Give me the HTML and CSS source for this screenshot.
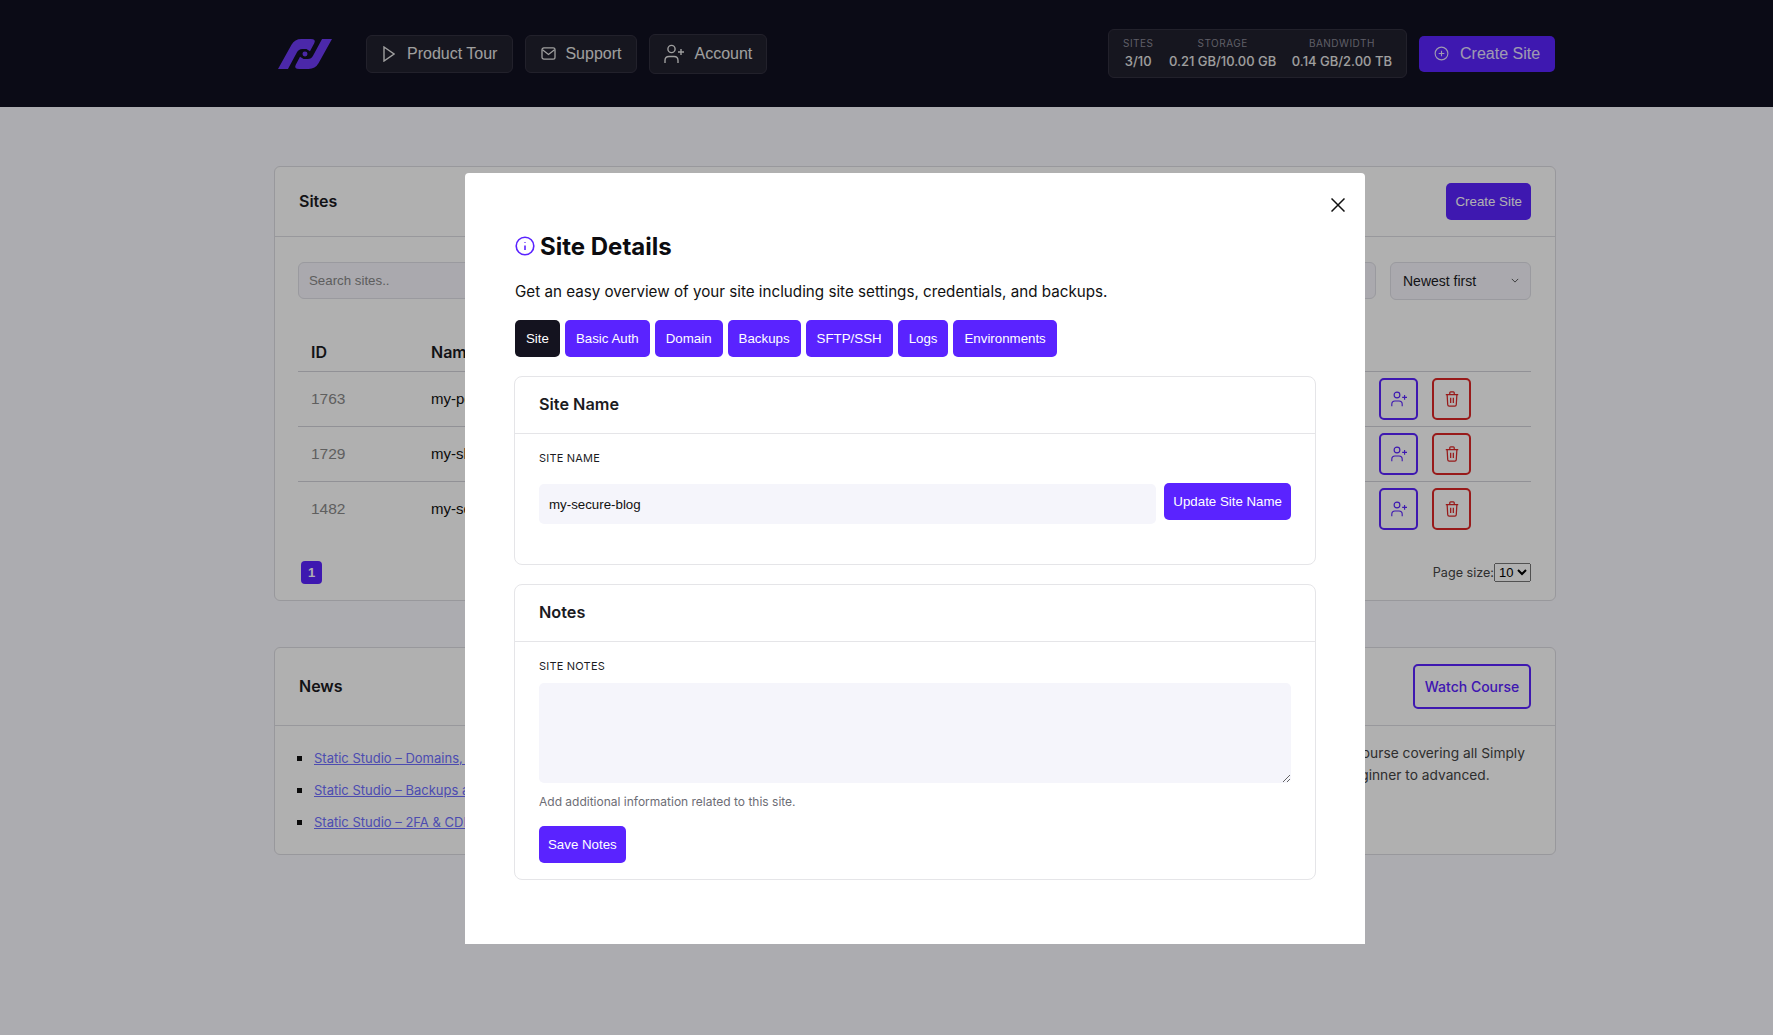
FILE: index.html
```html
<!DOCTYPE html>
<html lang="en">
<head>
<meta charset="utf-8">
<title>Site Details</title>
<link rel="stylesheet" href="styles.css">
</head>
<body>
<header class="topbar">
  <div class="topbar-inner">
    <svg class="logo" viewBox="0 0 152 84"><path d="M0 84 L38 16 Q47 0 66 0 H92 Q108 0 102 12 L90 34 L80 28 H68 Q58 28 53 38 L28 84 Z"/><path d="M152 0 L114 68 Q105 84 86 84 H60 Q44 84 50 72 L62 50 L72 56 H84 Q94 56 99 46 L124 0 Z"/><circle cx="76" cy="42" r="7"/></svg>
    <nav class="topnav">
      <a class="navbtn"><svg class="ico-play" viewBox="0 0 12 16"><path d="M1 1 L11 8 L1 15 Z"/></svg>Product Tour</a>
      <a class="navbtn"><svg class="ico-mail" viewBox="0 0 16 14"><rect x="1" y="1" width="14" height="12" rx="2"/><path d="M1.5 3 L8 8 L14.5 3"/></svg>Support</a>
      <a class="navbtn navbtn-tall"><svg class="ico-user" viewBox="0 0 20 20"><circle cx="7.5" cy="5" r="3.6"/><path d="M1 19 V16.5 Q1 12.5 5 12.5 H10 Q14 12.5 14 16.5 V19"/><path d="M17 5 V11 M14 8 H20"/></svg>Account</a>
    </nav>
    <div class="stats">
      <div class="stat"><span class="stat-label">Sites</span><span class="stat-value">3/10</span></div>
      <div class="stat"><span class="stat-label">Storage</span><span class="stat-value">0.21 GB/10.00 GB</span></div>
      <div class="stat"><span class="stat-label">Bandwidth</span><span class="stat-value">0.14 GB/2.00 TB</span></div>
    </div>
    <a class="create-top"><svg class="ico-plus" viewBox="0 0 16 16"><circle cx="8" cy="8" r="6.8"/><path d="M8 5 V11 M5 8 H11"/></svg>Create Site</a>
  </div>
</header>

<main class="page">
  <section class="card">
    <div class="card-head">
      <h3 class="card-title">Sites</h3>
      <a class="btn btn-dim">Create Site</a>
    </div>
    <div class="sites-body">
      <div class="filters">
        <input class="search" placeholder="Search sites..">
        <div class="sort">
          <select class="sort-select"><option>Newest first</option></select>
          <svg class="sort-chevron" viewBox="0 0 10 6"><path d="M1 1 L5 5 L9 1"/></svg>
        </div>
      </div>
      <table class="sites">
        <thead><tr><th class="col-id">ID</th><th class="col-name">Name</th><th class="col-act"></th></tr></thead>
        <tbody>
          <tr><td class="cell-id">1763</td><td>my-portfolio</td><td>
            <div class="actions"><a class="act act-blue"><svg class="ico-act" viewBox="0 0 20 20"><circle cx="7.5" cy="5" r="3.6"/><path d="M1 19 V16.5 Q1 12.5 5 12.5 H10 Q14 12.5 14 16.5 V19"/><path d="M17 5 V11 M14 8 H20"/></svg></a>
            <a class="act act-red"><svg class="ico-act" viewBox="0 0 16 18"><path d="M1 4 H15 M5.5 4 V2 Q5.5 1 6.5 1 H9.5 Q10.500 1 10.500 2 V4 M2.500 4 L3.200 15.500 Q3.300 17 4.800 17 H11.200 Q12.700 17 12.800 15.500 L13.500 4 M6.500 7.500 V13.500 M9.500 7.500 V13.500"/></svg></a></div></td></tr>
          <tr><td class="cell-id">1729</td><td>my-shop</td><td>
            <div class="actions"><a class="act act-blue"><svg class="ico-act" viewBox="0 0 20 20"><circle cx="7.5" cy="5" r="3.6"/><path d="M1 19 V16.5 Q1 12.5 5 12.5 H10 Q14 12.5 14 16.5 V19"/><path d="M17 5 V11 M14 8 H20"/></svg></a>
            <a class="act act-red"><svg class="ico-act" viewBox="0 0 16 18"><path d="M1 4 H15 M5.5 4 V2 Q5.5 1 6.5 1 H9.5 Q10.500 1 10.500 2 V4 M2.500 4 L3.200 15.500 Q3.300 17 4.800 17 H11.200 Q12.700 17 12.800 15.500 L13.500 4 M6.500 7.500 V13.500 M9.500 7.500 V13.500"/></svg></a></div></td></tr>
          <tr><td class="cell-id">1482</td><td>my-secure-blog</td><td>
            <div class="actions"><a class="act act-blue"><svg class="ico-act" viewBox="0 0 20 20"><circle cx="7.5" cy="5" r="3.6"/><path d="M1 19 V16.5 Q1 12.5 5 12.5 H10 Q14 12.5 14 16.5 V19"/><path d="M17 5 V11 M14 8 H20"/></svg></a>
            <a class="act act-red"><svg class="ico-act" viewBox="0 0 16 18"><path d="M1 4 H15 M5.5 4 V2 Q5.5 1 6.5 1 H9.5 Q10.500 1 10.500 2 V4 M2.500 4 L3.200 15.500 Q3.300 17 4.800 17 H11.200 Q12.700 17 12.800 15.500 L13.500 4 M6.500 7.500 V13.500 M9.500 7.500 V13.500"/></svg></a></div></td></tr>
        </tbody>
      </table>
      <div class="pager">
        <a class="page-num">1</a>
        <label class="page-size">Page size:<select class="page-select"><option>10</option></select></label>
      </div>
    </div>
  </section>

  <section class="card news">
    <div class="card-head news-head">
      <h3 class="card-title">News</h3>
      <a class="btn-outline">Watch Course</a>
    </div>
    <div class="news-body">
      <ul class="news-list">
        <li><a>Static Studio – Domains, SSL and Redirects</a></li>
        <li><a>Static Studio – Backups and Restores</a></li>
        <li><a>Static Studio – 2FA &amp; CDN Settings</a></li>
      </ul>
      <p class="news-text">Watch our free course covering all Simply<br>Static Studio, beginner to advanced.</p>
    </div>
  </section>
</main>

<div class="overlay"></div>

<div class="modal">
  <svg class="close" viewBox="0 0 14 14"><path d="M0.500 0.500 L13.500 13.500 M13.500 0.500 L0.500 13.500"/></svg>
  <h2 class="modal-title"><svg class="ico-info" viewBox="0 0 20 20"><circle cx="10" cy="10" r="8.800"/><path d="M10 9.500 V14 M10 6 V6.800"/></svg>Site Details</h2>
  <p class="modal-lead">Get an easy overview of your site including site settings, credentials, and backups.</p>
  <div class="tabs">
    <a class="tab tab-active">Site</a>
    <a class="tab">Basic Auth</a>
    <a class="tab">Domain</a>
    <a class="tab">Backups</a>
    <a class="tab">SFTP/SSH</a>
    <a class="tab">Logs</a>
    <a class="tab">Environments</a>
  </div>
  <section class="panel">
    <h4 class="panel-head">Site Name</h4>
    <div class="panel-body panel-name">
      <label class="field-label">Site Name</label>
      <div class="name-row">
        <input class="text-input" value="my-secure-blog">
        <a class="btn">Update Site Name</a>
      </div>
    </div>
  </section>
  <section class="panel panel-notes">
    <h4 class="panel-head">Notes</h4>
    <div class="panel-body">
      <label class="field-label">Site Notes</label>
      <textarea class="notes"></textarea>
      <p class="help">Add additional information related to this site.</p>
      <a class="btn btn-save">Save Notes</a>
    </div>
  </section>
</div>
</body>
</html>
```
FILE: styles.css
```css
* { box-sizing: border-box; }
html, body { height: 100%; }
body {
  margin: 0;
  overflow: hidden;
  background: #faf9ff;
  color: #111;
  font-family: "Liberation Sans", Arial, sans-serif;
  font-size: 15px;
}
h2, h3, h4, p, ul { margin: 0; }

/* Top bar */
.topbar { height: 107px; background: #111020; }
.topbar-inner {
  width: 1280px;
  margin-left: 275px;
  height: 100%;
  padding-left: 3px;
  display: flex;
  align-items: center;
}
.logo { width: 54px; height: 30px; fill: #6d3bf5; margin-right: 34px; }
.topnav { display: flex; align-items: center; gap: 12px; }
.navbtn {
  display: flex;
  align-items: center;
  height: 38px;
  padding: 0 15px;
  background: #21202d;
  border: 1px solid #32313f;
  border-radius: 6px;
  color: #e6e6e6;
  font-size: 16px;
}
.navbtn-tall { height: 40px; padding: 0 14px; }
.navbtn svg { fill: none; stroke: #e6e6e6; stroke-width: 1.4; }
.ico-play { width: 12px; height: 16px; margin: 0 12px 0 1px; }
.ico-mail { width: 15px; height: 13px; margin-right: 9px; }
.ico-user { width: 20px; height: 20px; margin-right: 10px; }
.stats {
  margin-left: auto;
  width: 299px;
  height: 49px;
  padding: 0 14px 2px;
  display: flex;
  align-items: center;
  justify-content: space-between;
  background: #21202d;
  border: 1px solid #32313f;
  border-radius: 6px;
}
.stat { display: flex; flex-direction: column; align-items: center; gap: 4px; }
.stat-label {
  font-family: Inter, sans-serif;
  font-size: 10px;
  line-height: 12px;
  letter-spacing: 0.5px;
  text-transform: uppercase;
  color: #8a8996;
}
.stat-value {
  font-family: Inter, sans-serif;
  font-size: 13px;
  line-height: 16px;
  font-weight: 500;
  color: #e6e6e6;
}
.create-top {
  margin-left: 12px;
  display: flex;
  align-items: center;
  height: 36px;
  width: 136px;
  padding-left: 15px;
  background: #5a23ff;
  border-radius: 5px;
  color: #e6e0ff;
  font-size: 16px;
}
.ico-plus { width: 15px; height: 15px; margin-right: 11px; fill: none; stroke: #e6e0ff; stroke-width: 1.2; }

/* Page */
.page { width: 1282px; margin: 59px 0 0 274px; }
.card {
  background: #fff;
  border: 1px solid #dcdce2;
  border-radius: 6px;
}
.card-head {
  display: flex;
  align-items: center;
  justify-content: space-between;
  height: 70px;
  padding: 0 24px 0 24px;
  border-bottom: 1px solid #dcdce2;
}
.card-title { font-family: Inter, sans-serif; font-size: 16px; font-weight: 600; color: #1b1b1f; margin-bottom: 2px; }
.btn {
  display: inline-flex;
  align-items: center;
  height: 37px;
  padding: 0 9px;
  background: #5a23ff;
  border-radius: 5px;
  color: #fff;
  font-size: 13.3px;
  white-space: nowrap;
}
.btn-dim { color: #fff; }
.sites-body { padding: 25px 24px 0 23px; height: 363px; }
.filters { display: flex; gap: 14px; }
.search {
  flex: 1;
  height: 37px;
  padding: 0 10px;
  background: #f6f5fc;
  border: 1px solid #dfdfe6;
  border-radius: 6px;
  font: 13.3px "Liberation Sans", Arial, sans-serif;
}
.search::placeholder { color: #888; }
.sort { position: relative; width: 141px; }
.sort-select {
  width: 100%;
  height: 38px;
  padding: 0 12px;
  appearance: none;
  background: #f6f5fc;
  border: 1px solid #dfdfe6;
  border-radius: 6px;
  color: #1b1b1f;
  font: 14px "Liberation Sans", Arial, sans-serif;
}
.sort-chevron {
  position: absolute;
  right: 12px;
  top: 16px;
  width: 8px;
  height: 5px;
  fill: none;
  stroke: #555;
  stroke-width: 1.2;
}
.sites { width: 100%; margin-top: 33px; border-collapse: collapse; table-layout: fixed; }
.sites th {
  height: 38px;
  padding: 0 0 0 13px;
  text-align: left;
  font-family: Inter, sans-serif;
  font-size: 16px;
  font-weight: 600;
  color: #1b1b1f;
  border-bottom: 1px solid #d3d3da;
}
.col-id { width: 133px; }
.col-name { width: 948px; }
.sites .col-name { padding-left: 0; }
.sites td { height: 55px; padding: 0; font-size: 15px; color: #111; border-bottom: 1px solid #d3d3da; }
.sites tr:last-child td { border-bottom: 0; }
.sites .cell-id { padding-left: 13px; color: #8a8a8a; font-size: 15.5px; }
.actions { display: flex; gap: 14px; }
.act {
  display: flex;
  align-items: center;
  justify-content: center;
  width: 39px;
  height: 42px;
  border: 2px solid;
  border-radius: 5px;
  background: transparent;
}
.act-blue { color: #5a23ff; }
.act-red { color: #dc2626; }
.ico-act { width: 16px; height: 16px; fill: none; stroke: currentColor; stroke-width: 1.4; }
.pager { display: flex; align-items: center; justify-content: space-between; margin-top: 25px; padding-left: 3px; }
.page-num {
  display: flex;
  align-items: center;
  justify-content: center;
  width: 21px;
  height: 23px;
  background: #5a23ff;
  border-radius: 4px;
  color: #fff;
  font-size: 13px;
  font-weight: 700;
}
.page-size { display: flex; align-items: center; font-family: Inter, sans-serif; font-size: 12.6px; color: #444; }
.page-select { width: 37px; height: 19px; padding: 0; font: 13px "Liberation Sans", Arial, sans-serif; }

/* News */
.news { margin-top: 46px; height: 208px; }
.news-head { height: 78px; }
.btn-outline {
  display: flex;
  align-items: center;
  justify-content: center;
  width: 118px;
  height: 45px;
  border: 2px solid #5a23ff;
  border-radius: 5px;
  color: #5a23ff;
  font-family: Inter, sans-serif;
  font-size: 14px;
  font-weight: 500;
}
.news-body { display: flex; justify-content: space-between; padding: 16px 30px 0 22px; }
.news-list { list-style: none; padding: 0; font-family: Inter, sans-serif; font-size: 13px; line-height: 32px; }
.news-list li { display: flex; align-items: center; gap: 12px; }
.news-list li::before { content: ""; width: 5px; height: 5px; background: #111; }
.news-list a { color: #6e6eff; text-decoration: underline; }
.news-text { font-family: Inter, sans-serif; font-size: 13.75px; line-height: 22px; color: #444; white-space: nowrap; }

/* Overlay + modal */
.overlay { position: fixed; inset: 0; background: rgba(0, 0, 0, .31); }
.modal {
  position: absolute;
  left: 465px;
  top: 173px;
  width: 900px;
  height: 771px;
  padding: 57px 49px 0 49px;
  background: #fff;
  border-radius: 4px 4px 0 0;
}
.close {
  position: absolute;
  right: 20px;
  top: 25px;
  width: 14px;
  height: 14px;
  fill: none;
  stroke: #111;
  stroke-width: 1.5;
}
.modal-title {
  display: flex;
  align-items: center;
  height: 32px;
  font-family: Inter, sans-serif;
  font-size: 24px;
  font-weight: 700;
  color: #0c0c10;
}
.ico-info { width: 20px; height: 20px; margin: 0 5px 0 1px; fill: none; stroke: #5a23ff; stroke-width: 1.6; }
.modal-lead {
  margin: 18px 0 0 1px;
  font-family: Inter, sans-serif;
  font-size: 15.2px;
  line-height: 24px;
  color: #111;
}
.tabs { display: flex; gap: 5px; margin: 16px 0 0 1px; }
.tab {
  display: flex;
  align-items: center;
  height: 37px;
  padding: 0 11px;
  background: #5a23ff;
  border-radius: 5px;
  color: #fff;
  font-size: 13.3px;
}
.tab-active { background: #14131f; }
.panel {
  margin-top: 19px;
  border: 1px solid #e5e5e8;
  border-radius: 8px;
}
.panel-head {
  height: 57px;
  padding: 0 0 2px 24px;
  display: flex;
  align-items: center;
  border-bottom: 1px solid #e5e5e8;
  font-family: Inter, sans-serif;
  font-size: 16.25px;
  font-weight: 600;
  color: #1b1b1f;
}
.panel-body { padding: 17px 24px 16px; }
.panel-name { padding-bottom: 40px; }
.field-label {
  display: block;
  height: 14px;
  font-family: Inter, sans-serif;
  font-size: 11px;
  line-height: 14px;
  font-weight: 400;
  letter-spacing: 0.2px;
  text-transform: uppercase;
  color: #1b1b1f;
}
.name-row { display: flex; align-items: flex-start; gap: 8px; margin-top: 18px; }
.text-input {
  flex: 1;
  height: 40px;
  margin-top: 1px;
  padding: 0 10px;
  background: #f5f5fb;
  border: 0;
  border-radius: 5px;
  color: #111;
  font: 13.3px "Liberation Sans", Arial, sans-serif;
}
.notes {
  display: block;
  width: 100%;
  height: 100px;
  margin-top: 10px;
  background: #f5f5fb;
  border: 0;
  border-radius: 5px;
}
.help {
  margin-top: 11px;
  font-family: Inter, sans-serif;
  font-size: 12px;
  line-height: 16px;
  color: #6d6d75;
}
.btn-save { margin-top: 16px; }
```
